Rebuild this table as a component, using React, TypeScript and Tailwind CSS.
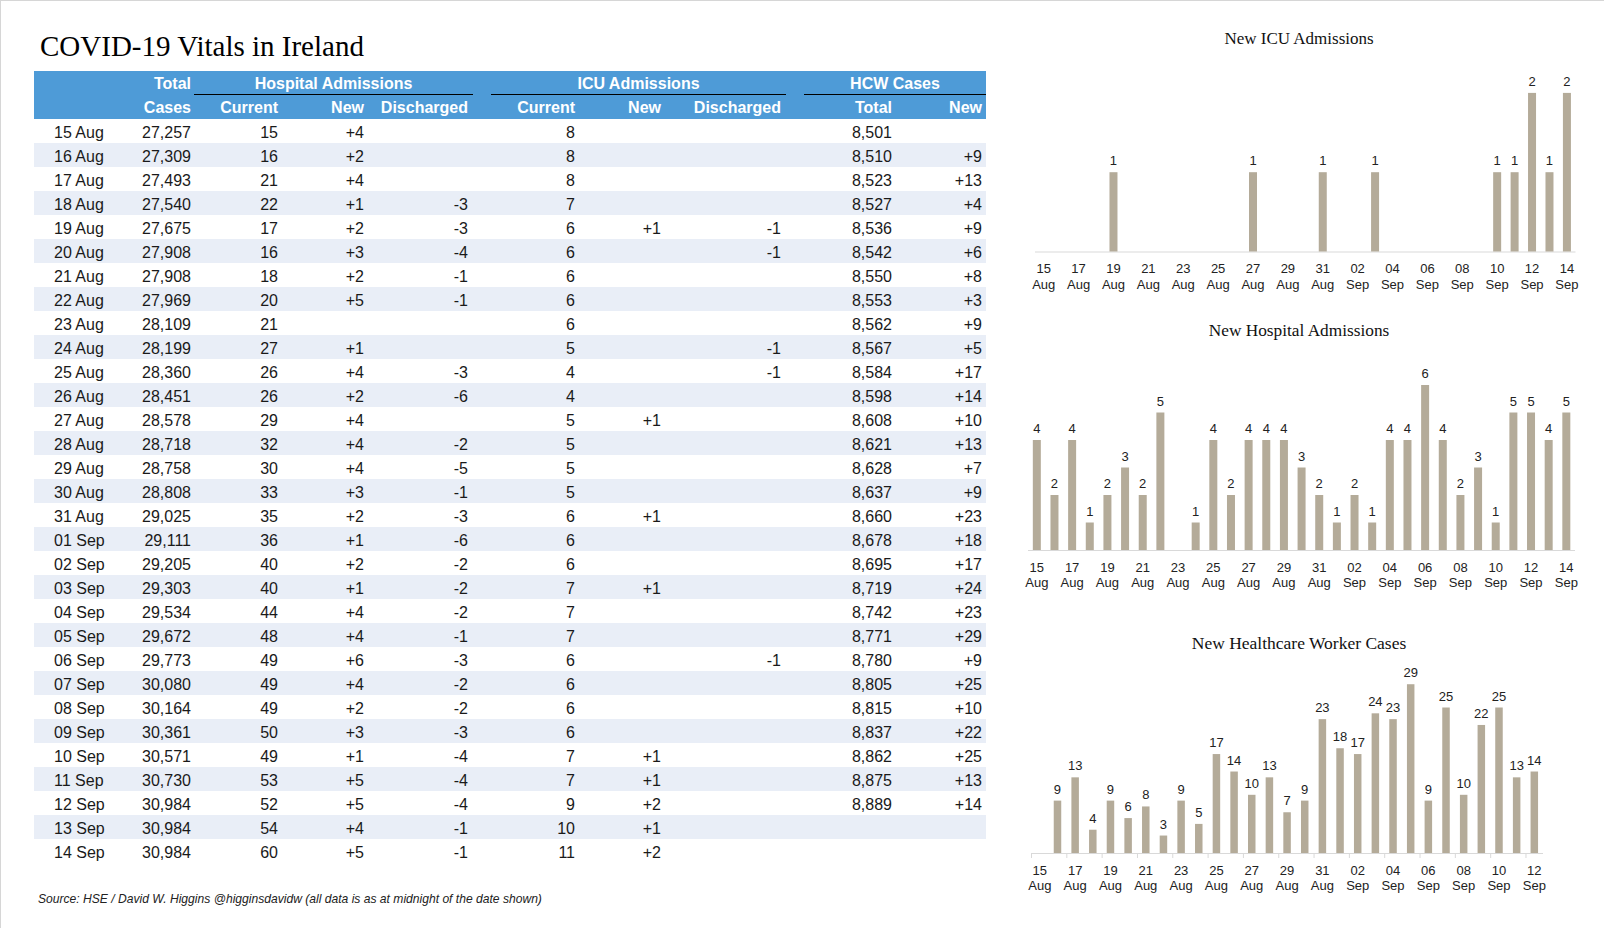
import React from "react";

type Row = [string, string, string, string, string, string, string, string, string, string];

const rows: Row[] = [
  ["15 Aug", "27,257", "15", "+4", "", "8", "", "", "8,501", ""],
  ["16 Aug", "27,309", "16", "+2", "", "8", "", "", "8,510", "+9"],
  ["17 Aug", "27,493", "21", "+4", "", "8", "", "", "8,523", "+13"],
  ["18 Aug", "27,540", "22", "+1", "-3", "7", "", "", "8,527", "+4"],
  ["19 Aug", "27,675", "17", "+2", "-3", "6", "+1", "-1", "8,536", "+9"],
  ["20 Aug", "27,908", "16", "+3", "-4", "6", "", "-1", "8,542", "+6"],
  ["21 Aug", "27,908", "18", "+2", "-1", "6", "", "", "8,550", "+8"],
  ["22 Aug", "27,969", "20", "+5", "-1", "6", "", "", "8,553", "+3"],
  ["23 Aug", "28,109", "21", "", "", "6", "", "", "8,562", "+9"],
  ["24 Aug", "28,199", "27", "+1", "", "5", "", "-1", "8,567", "+5"],
  ["25 Aug", "28,360", "26", "+4", "-3", "4", "", "-1", "8,584", "+17"],
  ["26 Aug", "28,451", "26", "+2", "-6", "4", "", "", "8,598", "+14"],
  ["27 Aug", "28,578", "29", "+4", "", "5", "+1", "", "8,608", "+10"],
  ["28 Aug", "28,718", "32", "+4", "-2", "5", "", "", "8,621", "+13"],
  ["29 Aug", "28,758", "30", "+4", "-5", "5", "", "", "8,628", "+7"],
  ["30 Aug", "28,808", "33", "+3", "-1", "5", "", "", "8,637", "+9"],
  ["31 Aug", "29,025", "35", "+2", "-3", "6", "+1", "", "8,660", "+23"],
  ["01 Sep", "29,111", "36", "+1", "-6", "6", "", "", "8,678", "+18"],
  ["02 Sep", "29,205", "40", "+2", "-2", "6", "", "", "8,695", "+17"],
  ["03 Sep", "29,303", "40", "+1", "-2", "7", "+1", "", "8,719", "+24"],
  ["04 Sep", "29,534", "44", "+4", "-2", "7", "", "", "8,742", "+23"],
  ["05 Sep", "29,672", "48", "+4", "-1", "7", "", "", "8,771", "+29"],
  ["06 Sep", "29,773", "49", "+6", "-3", "6", "", "-1", "8,780", "+9"],
  ["07 Sep", "30,080", "49", "+4", "-2", "6", "", "", "8,805", "+25"],
  ["08 Sep", "30,164", "49", "+2", "-2", "6", "", "", "8,815", "+10"],
  ["09 Sep", "30,361", "50", "+3", "-3", "6", "", "", "8,837", "+22"],
  ["10 Sep", "30,571", "49", "+1", "-4", "7", "+1", "", "8,862", "+25"],
  ["11 Sep", "30,730", "53", "+5", "-4", "7", "+1", "", "8,875", "+13"],
  ["12 Sep", "30,984", "52", "+5", "-4", "9", "+2", "", "8,889", "+14"],
  ["13 Sep", "30,984", "54", "+4", "-1", "10", "+1", "", "", ""],
  ["14 Sep", "30,984", "60", "+5", "-1", "11", "+2", "", "", ""],
];

const dayLabels: [string, string][] = rows.map((r) => {
  const [d, m] = r[0].split(" ");
  return [d, m];
});

const toNum = (s: string) => (s ? Math.abs(parseInt(s, 10)) : 0);
const hospNew = rows.map((r) => toNum(r[3]));
const icuNew = rows.map((r) => toNum(r[6]));
const hcwNew = rows.slice(0, 29).map((r) => toNum(r[9]));

const GRID =
  "grid grid-cols-[86px_74px_87px_86px_106px_18px_87px_86px_122px_18px_91px_91px]";

const BAR = "#b4ab99";
const FONT = "'Liberation Sans', Arial, sans-serif";

type ChartProps = {
  title: string;
  titleSize: string;
  data: number[];
  x0: number;
  x1: number;
  step: number;
  barW: number;
  axisY: number;
  unit: number;
  h: number;
  ticks?: boolean;
  pt: string;
};

function Chart({ title, titleSize, data, x0, x1, step, barW, axisY, unit, h, ticks, pt }: ChartProps) {
  return (
    <div className={`flex flex-col ${pt}`}>
      <div className={`w-[598px] text-center ${titleSize} leading-5 text-[#111] font-['Liberation_Serif',serif]`}>
        {title}
      </div>
      <svg width={604} height={h} className="block">
        <line x1={x0} x2={x1} y1={axisY + 0.5} y2={axisY + 0.5} stroke="#d9d9d9" strokeWidth={1} />
        {ticks &&
          data.map((_, i) =>
            i % 2 === 0 ? (
              <line
                key={"t" + i}
                x1={x0 + i * step + 0.5}
                x2={x0 + i * step + 0.5}
                y1={axisY}
                y2={axisY + 5}
                stroke="#d9d9d9"
                strokeWidth={1}
              />
            ) : null
          )}
        {data.map((v, i) => {
          if (!v) return null;
          const cx = x0 + (i + 0.5) * step;
          const bh = v * unit;
          return (
            <g key={i}>
              <rect x={cx - barW / 2} y={axisY - bh} width={barW} height={bh} fill={BAR} />
              <text
                x={cx}
                y={axisY - bh - 7}
                textAnchor="middle"
                fontFamily={FONT}
                fontSize={13}
                fill="#222"
              >
                {v}
              </text>
            </g>
          );
        })}
        {data.map((_, i) =>
          i % 2 === 0 ? (
            <g key={"l" + i}>
              <text
                x={x0 + (i + 0.5) * step}
                y={axisY + 21.5}
                textAnchor="middle"
                fontFamily={FONT}
                fontSize={13}
                fill="#222"
              >
                {dayLabels[i][0]}
              </text>
              <text
                x={x0 + (i + 0.5) * step}
                y={axisY + 37}
                textAnchor="middle"
                fontFamily={FONT}
                fontSize={13}
                fill="#222"
              >
                {dayLabels[i][1]}
              </text>
            </g>
          ) : null
        )}
      </svg>
    </div>
  );
}

const pads = [
  "pl-[20px] text-left",
  "pr-[3px] text-right",
  "pr-[3px] text-right",
  "pr-[3px] text-right",
  "pr-[5px] text-right",
  "pr-[3px] text-right",
  "pr-[3px] text-right",
  "pr-[5px] text-right",
  "pr-[3px] text-right",
  "pr-[4px] text-right",
];

function DataRow({ r, shaded }: { r: Row; shaded: boolean }) {
  const cells: React.ReactNode[] = [];
  r.forEach((v, i) => {
    cells.push(
      <div key={i} className={pads[i]}>
        {v}
      </div>
    );
    if (i === 4 || i === 7) cells.push(<div key={"g" + i} />);
  });
  return (
    <div
      className={`${GRID} h-[24px] pt-[3px] items-start leading-[21px] overflow-hidden ${
        shaded ? "bg-[#e9eef7]" : "bg-white"
      }`}
    >
      {cells}
    </div>
  );
}

export default function App() {
  return (
    <div className="w-[1604px] h-[928px] bg-white border-t border-l border-[#d6d6d6] flex overflow-hidden font-['Liberation_Sans',Arial,sans-serif] text-[#1a1a1a]">
      <div className="w-[999px] shrink-0 pl-[33px] pt-[31px] flex flex-col">
        <h1 className="ml-[6px] text-[29px] leading-[29px] font-normal text-black font-['Liberation_Serif',serif]">
          COVID-19 Vitals in Ireland
        </h1>
        <div className="mt-[10px] w-[952px] text-[16px]">
          <div className="bg-[#4e9bd7] text-white font-bold">
            <div className={`${GRID} h-[24px] pt-[2px] leading-[21px]`}>
              <div />
              <div className="text-right pr-[3px] leading-[22px]">Total</div>
              <div className="col-span-3 text-center border-b border-black">Hospital Admissions</div>
              <div />
              <div className="col-span-3 text-center border-b border-black">ICU Admissions</div>
              <div />
              <div className="col-span-2 text-center border-b border-black">HCW Cases</div>
            </div>
            <div className={`${GRID} h-[24px] leading-[25px]`}>
              <div />
              <div className="text-right pr-[3px]">Cases</div>
              <div className="text-right pr-[3px]">Current</div>
              <div className="text-right pr-[3px]">New</div>
              <div className="text-right pr-[5px]">Discharged</div>
              <div />
              <div className="text-right pr-[3px]">Current</div>
              <div className="text-right pr-[3px]">New</div>
              <div className="text-right pr-[5px]">Discharged</div>
              <div />
              <div className="text-right pr-[3px]">Total</div>
              <div className="text-right pr-[4px]">New</div>
            </div>
          </div>
          {rows.map((r, i) => (
            <DataRow key={r[0]} r={r} shaded={i % 2 === 1} />
          ))}
        </div>
        <div className="mt-[29px] ml-[4px] text-[12.1px] leading-[14px] italic text-[#222]">
          Source: HSE / David W. Higgins @higginsdavidw (all data is as at midnight of the date shown)
        </div>
      </div>
      <div className="w-[604px] shrink-0 flex flex-col">
        <Chart
          title="New ICU Admissions"
          titleSize="text-[17px]"
          data={icuNew}
          x0={35}
          x1={575.5}
          step={17.44}
          barW={8}
          axisY={202.5}
          unit={79.3}
          h={251}
          pt="pt-[28px]"
        />
        <Chart
          title="New Hospital Admissions"
          titleSize="text-[17.3px]"
          data={hospNew}
          x0={28}
          x1={575}
          step={17.65}
          barW={8}
          axisY={209}
          unit={27.5}
          h={271}
          pt="pt-[21px]"
        />
        <Chart
          title="New Healthcare Worker Cases"
          titleSize="text-[17.5px]"
          data={hcwNew}
          x0={31}
          x1={543}
          step={17.66}
          barW={7.5}
          axisY={200}
          unit={5.82}
          h={274}
          ticks
          pt="pt-[21px]"
        />
      </div>
    </div>
  );
}
